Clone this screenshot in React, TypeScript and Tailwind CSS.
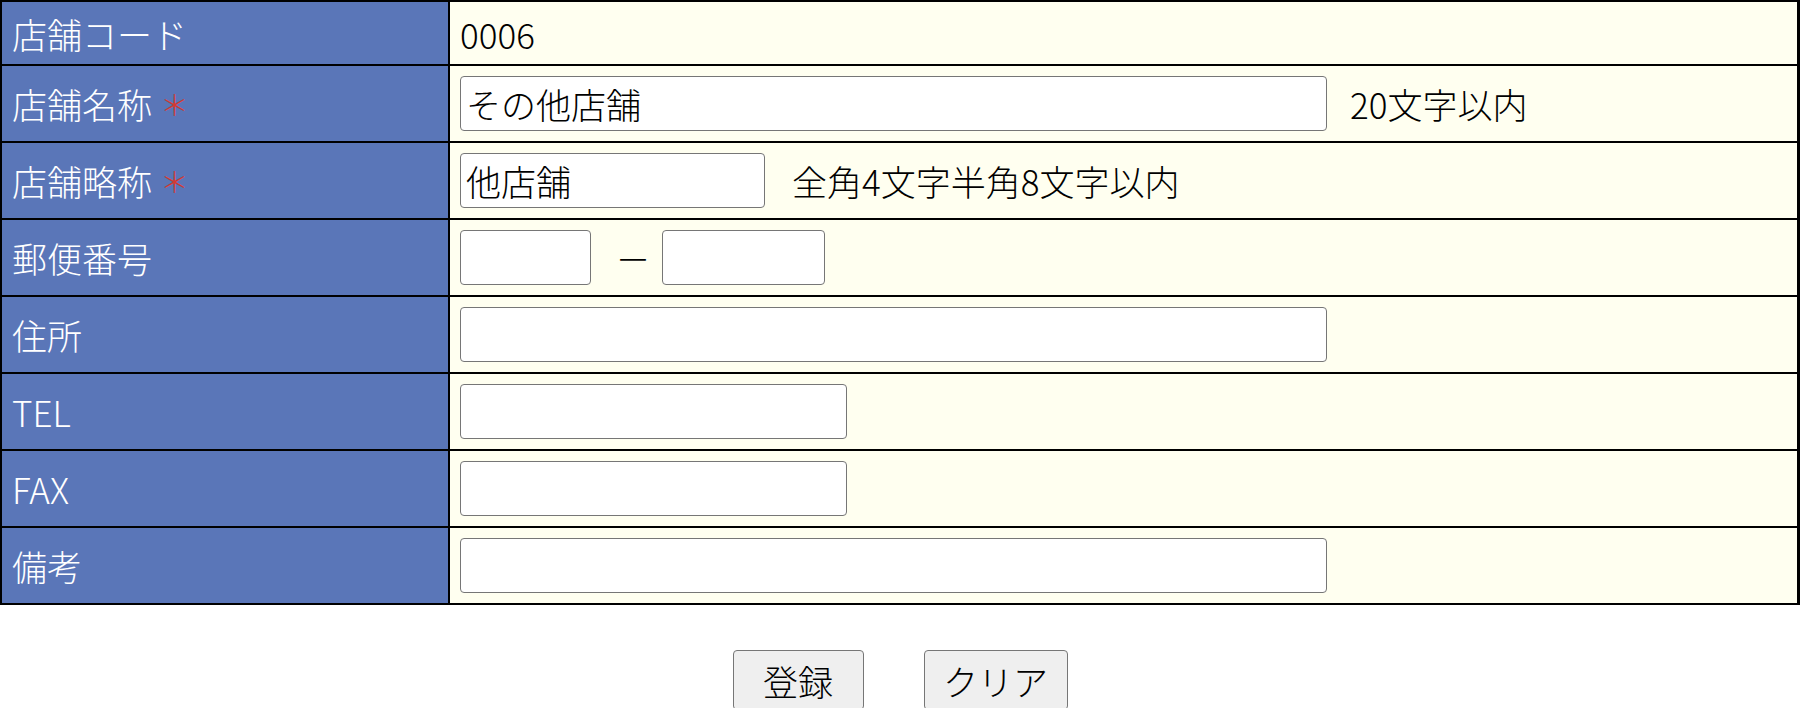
import { ReactNode } from "react";

const jp = "font-['Noto_Sans_CJK_JP','Noto_Sans',sans-serif]";

interface RowProps {
  label: ReactNode;
  first?: boolean;
  children: ReactNode;
}

function Row({ label, first, children }: RowProps) {
  return (
    <div className={first ? "flex h-[62px]" : "flex h-[77px] border-t-2 border-black"}>
      <div className="w-[448px] shrink-0 flex items-center border-r-2 border-black bg-[#5a76b8] pl-[10px] text-white">
        {label}
      </div>
      <div className="flex-1 flex items-center bg-[#fffff0] pl-[10px]">{children}</div>
    </div>
  );
}

function Required({ children }: { children: ReactNode }) {
  return (
    <>
      <span>{children}</span>
      <span className="ml-[8px] text-[29px] text-[#d33a32]">＊</span>
    </>
  );
}

function Field({ width, value = "" }: { width: string; value?: string }) {
  return (
    <input
      type="text"
      defaultValue={value}
      className={`${width} h-[55px] rounded-[4px] border border-[#767676] bg-white px-[5px] text-[35px] font-light text-black outline-none`}
    />
  );
}

export default function App() {
  return (
    <div className={`min-h-screen bg-white text-[35px] font-light leading-none text-black ${jp}`}>
      <div className="border-2 border-r-[3px] border-black">
        <Row label="店舗コード" first>
          <span>0006</span>
        </Row>

        <Row label={<Required>店舗名称</Required>}>
          <Field width="w-[867px]" value="その他店舗" />
          <span className="ml-[23px]">20文字以内</span>
        </Row>

        <Row label={<Required>店舗略称</Required>}>
          <Field width="w-[305px]" value="他店舗" />
          <span className="ml-[27px]">全角4文字半角8文字以内</span>
        </Row>

        <Row label="郵便番号">
          <Field width="w-[131px]" />
          <span className="w-[71px] pl-[13px] text-center">－</span>
          <Field width="w-[163px]" />
        </Row>

        <Row label="住所">
          <Field width="w-[867px]" />
        </Row>

        <Row label="TEL">
          <Field width="w-[387px]" />
        </Row>

        <Row label="FAX">
          <Field width="w-[387px]" />
        </Row>

        <Row label="備考">
          <Field width="w-[867px]" />
        </Row>
      </div>

      <div className="mt-[45px] flex justify-center gap-[60px]">
        <button
          type="button"
          className="h-[60px] w-[131px] rounded-[4px] border border-[#767676] bg-[#efefef] text-[35px] font-light"
        >
          登録
        </button>
        <button
          type="button"
          className="h-[60px] w-[144px] rounded-[4px] border border-[#767676] bg-[#efefef] text-[35px] font-light"
        >
          クリア
        </button>
      </div>
    </div>
  );
}
